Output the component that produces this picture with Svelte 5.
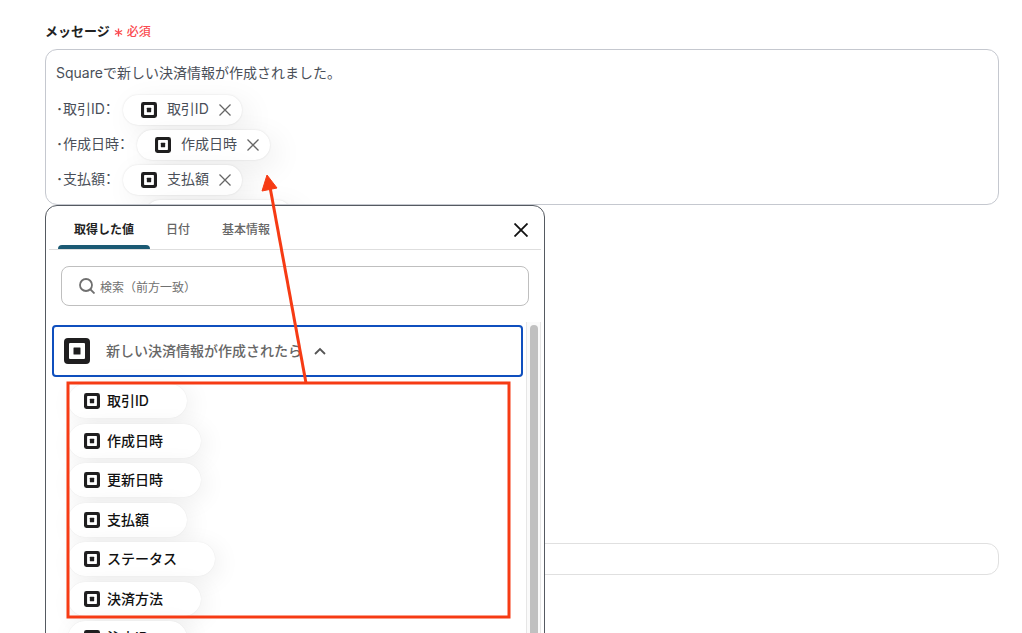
<script lang="ts">
  type Line = { label: string; token: string };

  let lines: Line[] = $state([
    { label: '･取引ID：', token: '取引ID' },
    { label: '･作成日時：', token: '作成日時' },
    { label: '･支払額：', token: '支払額' },
    { label: '･ステータス：', token: 'ステータス' }
  ]);

  const tabs = ['取得した値', '日付', '基本情報'];
  const values = ['取引ID', '作成日時', '更新日時', '支払額', 'ステータス', '決済方法', '注文ID'];

  let activeTab = $state(0);
  let panelOpen = $state(true);
  let expanded = $state(true);
  let query = $state('');
  let note = $state('');

  let filtered = $derived(values.filter((v) => v.startsWith(query)));

  function removeLine(index: number) {
    lines = lines.filter((_, i) => i !== index);
  }
</script>

{#snippet logo()}
  <svg class="logo" viewBox="0 0 26 26" aria-hidden="true">
    <rect width="26" height="26" rx="4" fill="#1f1e1f" />
    <rect x="5" y="5" width="16" height="16" rx="1" fill="#fff" />
    <rect x="9.5" y="9.5" width="7" height="7" rx="0.5" fill="#1f1e1f" />
  </svg>
{/snippet}

<main class="page">
  <div class="field-label">
    <span id="message-label">メッセージ</span>
    <span class="required">
      <svg viewBox="0 0 10 10" aria-hidden="true">
        <path d="M5 0.5v9M1 2.8l8 4.4M9 2.8l-8 4.4" />
      </svg>
      必須
    </span>
  </div>

  <div class="editor-wrap">
    <div class="editor" role="textbox" tabindex="0" aria-multiline="true" aria-labelledby="message-label">
      <p class="intro">Squareで新しい決済情報が作成されました。</p>
      {#each lines as line, i (line.token)}
        <div class="line">
          <span class="line-label">{line.label}</span>
          <span class="token">
            {@render logo()}
            <span>{line.token}</span>
            <button type="button" aria-label="削除" onclick={() => removeLine(i)}>
              <svg viewBox="0 0 12 12"><path d="M0.5 0.5l11 11M11.5 0.5l-11 11" /></svg>
            </button>
          </span>
        </div>
      {/each}
    </div>

    {#if panelOpen}
      <section class="panel">
        <header class="tabs">
          {#each tabs as tab, i}
            <button type="button" class="tab" class:active={activeTab === i} onclick={() => (activeTab = i)}>
              {tab}
            </button>
          {/each}
          <button type="button" class="close" aria-label="閉じる" onclick={() => (panelOpen = false)}>
            <svg viewBox="0 0 14 14"><path d="M0.5 0.5l13 13M13.5 0.5l-13 13" /></svg>
          </button>
        </header>

        <label class="search">
          <svg viewBox="0 0 16 16" aria-hidden="true">
            <circle cx="7" cy="7" r="6" />
            <path d="M11.5 11.5l4 4" />
          </svg>
          <input type="text" placeholder="検索（前方一致）" aria-label="検索（前方一致）" bind:value={query} />
        </label>

        <div class="results">
          <div class="results-body">
            <button type="button" class="group" aria-expanded={expanded} onclick={() => (expanded = !expanded)}>
              {@render logo()}
              <span>新しい決済情報が作成されたら</span>
              <svg class="chevron" viewBox="0 0 12 8"><path d="M1 7l5-5 5 5" /></svg>
            </button>
            {#if expanded}
              <div class="values">
                {#each filtered as value (value)}
                  <button type="button" class="value">
                    {@render logo()}
                    <span>{value}</span>
                  </button>
                {/each}
              </div>
            {/if}
          </div>
          <div class="track"><div class="thumb"></div></div>
        </div>
      </section>
    {/if}
  </div>

  <input class="next-field" type="text" aria-label="入力欄" bind:value={note} />

  <!-- callout from the value list to the message tokens -->
  <svg class="callout" width="512" height="620" viewBox="0 0 512 620" aria-hidden="true">
    <rect x="68" y="383" width="441" height="234" />
    <path d="M306 383L270 187" />
    <polygon points="267,175 277,188 262,191" />
  </svg>
</main>

<style>
  :global(body) {
    margin: 0;
    background: #fff;
  }
  .page {
    position: relative;
    box-sizing: border-box;
    height: 100vh;
    overflow: hidden;
    padding: 20px 23px 0 45px;
    font-family: Inter, 'Noto Sans CJK JP', sans-serif;
    font-size: 14px;
    color: #4a4f58;
  }
  button,
  input {
    font-family: inherit;
    color: inherit;
  }
  button {
    padding: 0;
    border: 0;
    background: none;
    cursor: pointer;
  }
  svg {
    display: block;
    flex: none;
    fill: none;
  }
  .logo {
    width: 16px;
    height: 16px;
  }
  .field-label {
    display: flex;
    align-items: center;
    gap: 4px;
    height: 20px;
    margin-bottom: 9px;
    font-size: 13px;
    font-weight: 700;
    color: #222;
  }
  .required {
    display: flex;
    align-items: center;
    gap: 4px;
    font-size: 12px;
    font-weight: 500;
    color: #fa4b50;
  }
  .required svg {
    width: 9px;
    height: 9px;
    margin-top: 4px;
    stroke: currentColor;
    stroke-width: 1.5;
  }
  .editor-wrap {
    position: relative;
  }
  .editor {
    box-sizing: border-box;
    height: 156px;
    overflow: hidden;
    padding: 8px 10px;
    border: 1px solid #c5c8cf;
    border-radius: 12px;
  }
  .intro {
    margin: 0;
    line-height: 30px;
  }
  .line {
    display: flex;
    height: 35px;
  }
  .line:first-of-type {
    margin-top: 7px;
  }
  .line-label {
    line-height: 27px;
    font-feature-settings: 'palt';
    margin-right: 11px;
  }
  .token {
    display: flex;
    align-items: center;
    height: 30px;
    padding: 0 11px 0 18px;
    border-radius: 15px;
    background: #fff;
    box-shadow: 0 0 2px rgba(0, 0, 0, 0.12), 8px 8px 30px rgba(0, 0, 0, 0.07);
  }
  .token span {
    margin: 0 10px;
    line-height: 20px;
    padding-bottom: 2px;
  }
  .token button svg {
    width: 12px;
    height: 12px;
    stroke: #666;
    stroke-width: 1.3;
  }
  .panel {
    position: absolute;
    z-index: 1;
    top: 100%;
    left: 0;
    box-sizing: border-box;
    width: 500px;
    padding: 0 3px;
    border: 1px solid #555a61;
    border-radius: 12px;
    background: #fff;
  }
  .tabs {
    display: flex;
    height: 43px;
    padding-left: 9px;
    border-bottom: 1px solid #dedede;
  }
  .tab {
    position: relative;
    height: 43px;
    padding: 2px 16px 0;
    font-size: 12px;
    font-weight: 500;
    color: #666;
  }
  .tab.active {
    font-weight: 700;
    color: #222;
  }
  .tab.active::after {
    content: '';
    position: absolute;
    left: 0;
    right: 0;
    bottom: 0;
    height: 4px;
    border-radius: 4px 4px 0 0;
    background: #1b5a74;
  }
  .close {
    margin: 4px 13px 0 auto;
  }
  .close svg {
    width: 14px;
    height: 14px;
    stroke: #111;
    stroke-width: 1.8;
  }
  .search {
    display: flex;
    align-items: center;
    gap: 5px;
    box-sizing: border-box;
    height: 40px;
    margin: 16px 12px;
    padding: 0 17px;
    border: 1px solid #bfbfbf;
    border-radius: 8px;
  }
  .search svg {
    width: 16px;
    height: 16px;
    stroke: #707070;
    stroke-width: 1.8;
  }
  .search input {
    flex: 1;
    padding: 2px 0 0;
    border: 0;
    outline: 0;
    background: none;
    font-size: 12px;
  }
  .search input::placeholder {
    color: #707070;
  }
  .results {
    display: flex;
    height: 400px;
  }
  .results-body {
    flex: 1;
    padding: 3px;
  }
  .group {
    display: flex;
    align-items: center;
    box-sizing: border-box;
    width: 100%;
    height: 52px;
    padding: 0 10px;
    border: 2px solid #0f4fbe;
    border-radius: 4px;
    font-size: 14px;
    font-weight: 500;
    color: #666;
  }
  .group .logo {
    width: 26px;
    height: 26px;
  }
  .group span {
    margin: 0 12px 0 16px;
    padding-bottom: 2px;
  }
  .chevron {
    width: 12px;
    height: 8px;
    stroke: #555;
    stroke-width: 1.8;
  }
  .values {
    display: flex;
    flex-direction: column;
    align-items: flex-start;
    justify-content: space-between;
    height: 271px;
    padding: 7px 16px;
  }
  .value {
    display: flex;
    align-items: center;
    gap: 7px;
    height: 34px;
    padding: 0 38px 0 16px;
    border-radius: 17px;
    background: #fff;
    box-shadow: 0 0 1px rgba(0, 0, 0, 0.1), 4px 4px 24px rgba(0, 0, 0, 0.07);
    font-size: 14px;
    font-weight: 500;
    color: #111;
  }
  .value span {
    padding-bottom: 2px;
  }
  .track {
    box-sizing: border-box;
    width: 15px;
    padding: 3px 3px 0;
    border: solid #e6e6e6;
    border-width: 0 1px;
    background: #fafafa;
  }
  .thumb {
    width: 8px;
    height: 100%;
    border-radius: 4px;
    background: #c0c0c0;
  }
  .next-field {
    box-sizing: border-box;
    width: 100%;
    height: 32px;
    margin-top: 338px;
    padding: 0 10px;
    border: 1px solid #e0e0e0;
    border-radius: 12px;
    background: #fff;
  }
  .callout {
    position: absolute;
    z-index: 2;
    top: 0;
    left: 0;
    pointer-events: none;
    stroke: #f63b14;
    stroke-width: 3;
  }
  .callout polygon {
    fill: #f63b14;
    stroke-width: 1;
  }
</style>
